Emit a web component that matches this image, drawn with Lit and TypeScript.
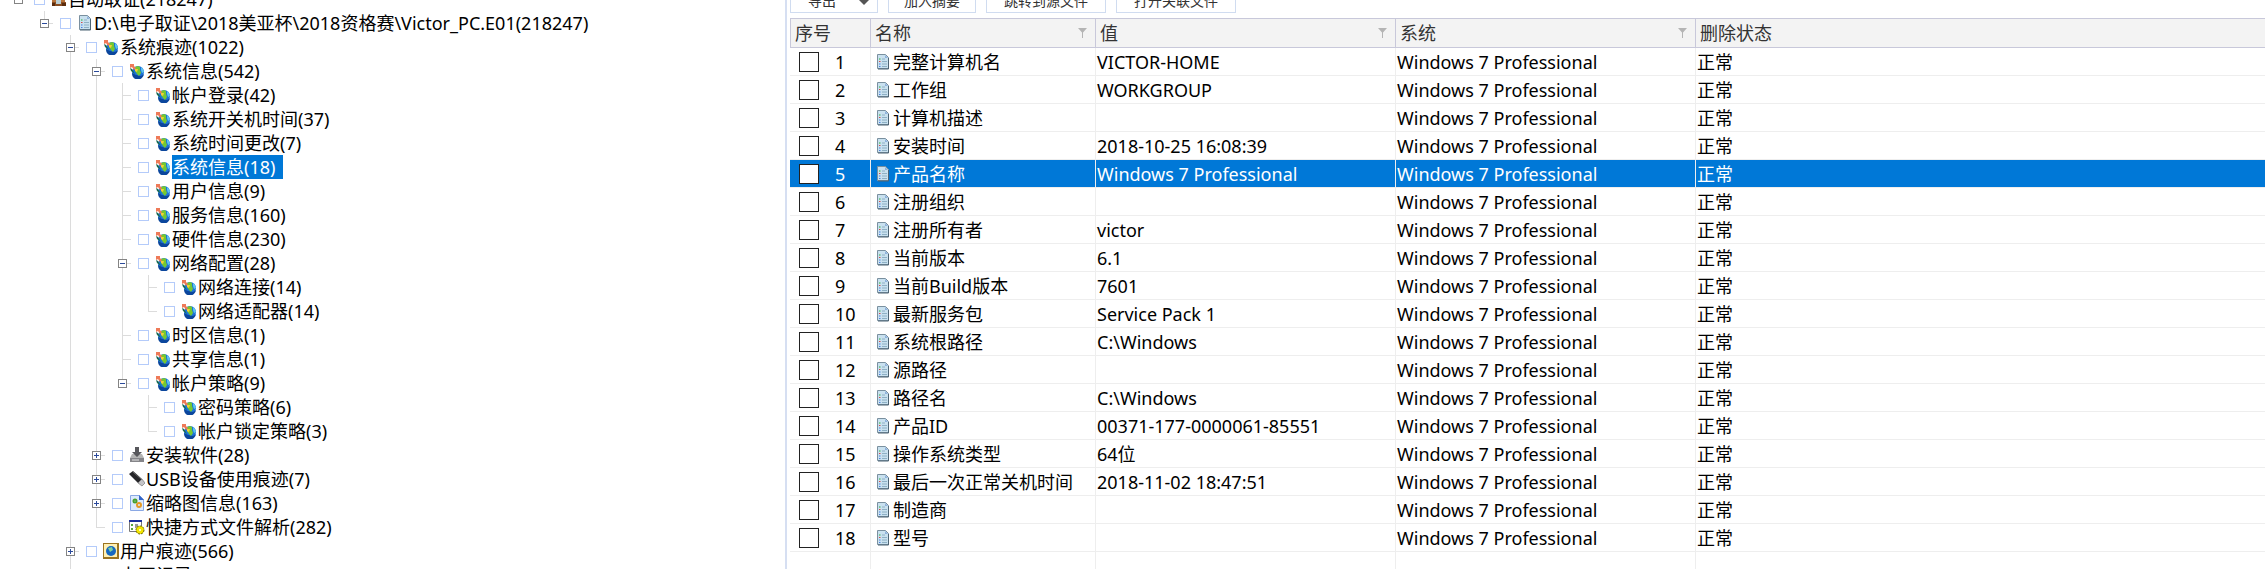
import { LitElement, html, css, svg, nothing } from "lit";
import { customElement, state } from "lit/decorators.js";

interface Node {
  text: string;
  icon: string;
  open?: boolean;
  closed?: boolean;
  more?: boolean;
  children?: Node[];
}

const g = (text: string, children?: Node[]): Node => ({ text, icon: "globe", open: !!children, children });

const TREE: Node = {
  text: "自动取证(218247)", icon: "case", open: true, children: [
    { text: "D:\\电子取证\\2018美亚杯\\2018资格赛\\Victor_PC.E01(218247)", icon: "doc", open: true, children: [
      g("系统痕迹(1022)", [
        g("系统信息(542)", [
          g("帐户登录(42)"), g("系统开关机时间(37)"), g("系统时间更改(7)"), g("系统信息(18)"),
          g("用户信息(9)"), g("服务信息(160)"), g("硬件信息(230)"),
          g("网络配置(28)", [g("网络连接(14)"), g("网络适配器(14)")]),
          g("时区信息(1)"), g("共享信息(1)"),
          g("帐户策略(9)", [g("密码策略(6)"), g("帐户锁定策略(3)")]),
        ]),
        { text: "安装软件(28)", icon: "install", closed: true },
        { text: "USB设备使用痕迹(7)", icon: "usb", closed: true },
        { text: "缩略图信息(163)", icon: "thumb", closed: true },
        { text: "快捷方式文件解析(282)", icon: "link" },
      ]),
      { text: "用户痕迹(566)", icon: "user", closed: true },
      { text: "上网记录(24881)", icon: "net", closed: true, more: true },
    ] },
  ],
};

const W7 = "Windows 7 Professional";
const ROWS: [string, string][] = [
  ["完整计算机名", "VICTOR-HOME"], ["工作组", "WORKGROUP"], ["计算机描述", ""],
  ["安装时间", "2018-10-25 16:08:39"], ["产品名称", W7], ["注册组织", ""],
  ["注册所有者", "victor"], ["当前版本", "6.1"], ["当前Build版本", "7601"],
  ["最新服务包", "Service Pack 1"], ["系统根路径", "C:\\Windows"], ["源路径", ""],
  ["路径名", "C:\\Windows"], ["产品ID", "00371-177-0000061-85551"], ["操作系统类型", "64位"],
  ["最后一次正常关机时间", "2018-11-02 18:47:51"], ["制造商", ""], ["型号", ""],
];

const ICONS: Record<string, unknown> = {
  globe: svg`<circle cx="9" cy="9" r="6" fill="#1d74d8"/><path d="M3 10a6 6 0 0 0 12 1l-3 2-5-1z" fill="#0b469c"/>
    <path d="M6 4l3-1 2 1v3l1 3-2 3-2-2-2-3z" fill="#74c832"/><path d="M12 4l2 2 1 3-2 1-1-3z" fill="#5cc4f0"/>
    <path d="M6 6h3l-1 3-2-1z" fill="#f4cf35"/><path d="M1 1l4 0v2l2 2-2 2-2-3-2 1z" fill="#ee7a58"/><path d="M1 5l2 1 3 5-4-3z" fill="#17694f"/>`,
  net: svg`<circle cx="8" cy="9" r="7" fill="#2b93b5"/><path d="M5 4h6v3H5z" fill="#8fd4de"/>`,
  doc: svg`<path d="M2.500 .5h8l3 3v11h-11z" fill="#c9e1ef" stroke="#7a909f"/><path d="M10 1v3h3" fill="#8fb2dc"/><path d="M13.500 4v11H3" fill="none" stroke="#4d6474"/>
    <path d="M7 5h3M7 7.500h5M7 10h5M7 12.500h5" stroke="#8eb0c4"/><path d="M4 5h1.500" stroke="#2eb135"/><path d="M4 7.500h1.500" stroke="#d14a4a"/><path d="M4 10h1.500M4 12.500h1.500" stroke="#4a7fe0"/>`,
  case: svg`<path d="M1 3h13v8H1z" fill="#b8743c"/><path d="M1 11h14v4H1z" fill="#8a4e22"/><path d="M1 12h3v3H1zM11 12h4v3h-4z" fill="#5a2c0e"/><path d="M5 9h5v4H5z" fill="#b9cfd6"/>`,
  install: svg`<path d="M3 7h10l2 4v4H1v-4z" fill="#b4b4b4"/><path d="M1 11h14v4H1z" fill="#858589"/><path d="M3 13h7" stroke="#e4e4e4"/><path d="M6 0h4v5h3l-5 5-5-5h3z" fill="#58585c"/>`,
  usb: svg`<path d="M0 3l4-3 9 8-4 4z" fill="#26262a"/><path d="M4 1l8 7" stroke="#666"/><path d="M9 12l4-4 3 4-3 3z" fill="#c4c4c8" stroke="#555" stroke-width=".5"/>`,
  thumb: svg`<path d="M1.500 .5h9l4 4v11h-13z" fill="#dceafd" stroke="#8aa8e4"/><path d="M10 0v5h5" fill="#3466c8"/>
    <circle cx="6" cy="6" r="1.500" fill="none" stroke="#46a02e" stroke-width="2"/><circle cx="10" cy="10" r="2" fill="none" stroke="#e59a26" stroke-width="2"/>`,
  link: svg`<path d="M.5 1.500h12v11H.5z" fill="#fff" stroke="#777"/><path d="M0 2h13" stroke="#1d2f9c" stroke-width="2"/><path d="M2 6h2M2 10h2" stroke="#5aa53c" stroke-width="2"/><path d="M6 6h3M6 8h3" stroke="#333"/>
    <circle cx="11" cy="11" r="4" fill="#f4e500" stroke="#6c6400" stroke-dasharray="2 1"/><circle cx="11" cy="11" r="1" fill="#fff"/>`,
  user: svg`<path d="M0 0h16v16H0z" fill="#9c7420"/><path d="M1 1h13v13H1z" fill="#fff0b4"/><circle cx="8" cy="8" r="5" fill="#1668c0"/><path d="M5 5l4-1 1 3-3 2z" fill="#7fd0a0"/>`,
};

const icon = (name: string) => html`<svg class="icon" viewBox="0 0 16 16" aria-hidden="true">${ICONS[name]}</svg>`;

@customElement("app-root")
export class AppRoot extends LitElement {
  static styles = css`
    :host {
      display: flex;
      height: 100vh;
      overflow: hidden;
      background: #fff;
      color: #000;
      font: 18px/24px "Noto Sans", "Noto Sans CJK SC", sans-serif;
      white-space: nowrap;
    }
    * { box-sizing: border-box; }
    input { appearance: none; flex: none; margin: 0; background: #fff; }
    input:checked { background: #0078d7; box-shadow: inset 0 0 0 3px #fff; }
    .icon { width: 16px; height: 16px; flex: none; }

    .side { flex: 0 0 785px; overflow: hidden; display: flex; flex-direction: column; }
    .tree { margin: -13px 0 0 5px; padding: 0; }
    ul { list-style: none; margin: 0; padding: 0; }
    li { display: grid; grid-template-columns: 26px 1fr; }
    .rail {
      display: flex;
      align-items: flex-start;
      padding: 8px 0 0 9px;
      background:
        linear-gradient(#dcdcdc, #dcdcdc) 13px 0 / 1px 100% no-repeat,
        linear-gradient(#dcdcdc, #dcdcdc) 13px 12px / 9px 1px no-repeat;
    }
    .last > .rail {
      background:
        linear-gradient(#dcdcdc, #dcdcdc) 13px 0 / 1px 12px no-repeat,
        linear-gradient(#dcdcdc, #dcdcdc) 13px 12px / 9px 1px no-repeat;
    }
    .toggle {
      width: 9px; height: 9px; padding: 0;
      border: 1px solid #848484;
      background: linear-gradient(#2b4a9b, #2b4a9b) center / 5px 1px no-repeat #fff;
    }
    .plus {
      background:
        linear-gradient(#2b4a9b, #2b4a9b) center / 5px 1px no-repeat,
        linear-gradient(#2b4a9b, #2b4a9b) center / 1px 5px no-repeat #fff;
    }
    .node { display: flex; align-items: center; height: 24px; padding-left: 3px; }
    .node input { width: 11px; height: 11px; margin-right: 6px; border: 1px solid #b4cbfa; }
    .name { margin-left: 1px; padding-right: 8px; height: 24px; }
    .selected .name { background: #0078d7; color: #fff; }

    .main { flex: 1; min-width: 0; border-left: 2px solid #d6dff2; padding-left: 3px; display: flex; flex-direction: column; }
    .bar { display: flex; gap: 10px; margin-top: -13px; margin-bottom: 5px; }
    .bar button {
      width: 120px; height: 26px; padding: 2px 0 0;
      display: flex; align-items: center; justify-content: center;
      border: 1px solid #d0dcf0; background: #fff; color: #333;
      font: 14px/20px "Noto Sans", "Noto Sans CJK SC", sans-serif;
    }
    .bar .short { width: 88px; }
    .bar .export { justify-content: space-between; padding: 2px 8px 0 17px; }
    .arrow { width: 10px; height: 8px; }

    table { width: 100%; border-collapse: separate; border-spacing: 0; table-layout: fixed; }
    .c1 { width: 81px; } .c2 { width: 225px; } .c3, .c4 { width: 300px; }
    th {
      height: 30px; padding: 0 8px 0 4px;
      border: 1px solid #c8c8da; border-left: 0;
      background: #f3f3f3; color: #333; font-weight: 400; text-align: left;
    }
    th:first-child { border-left: 1px solid #c8c8da; }
    th:last-child { border-right: 0; }
    .head { display: flex; align-items: center; justify-content: space-between; }
    .funnel { width: 9px; height: 10px; }
    td { height: 28px; padding: 0 0 0 1px; border-bottom: 1px solid #eee; border-right: 1px solid #eee; }
    td:last-child { border-right: 0; }
    .cell { display: flex; align-items: center; height: 24px; }
    .num input { width: 20px; height: 20px; margin: 0 16px 0 8px; border: 1px solid #222; }
    .item { padding-left: 3px; gap: 2px; }
    .on td { background: #0078d7; color: #fff; }
    .fill { flex: 1; display: grid; grid-template-columns: 81px 225px 300px 300px; }
    .fill span { border-right: 1px solid #eee; }
  `;

  @state() private selected = "系统信息(18)";
  @state() private row = 4;

  private node(n: Node, last: boolean): unknown {
    return html`<li class=${last ? "last" : ""}>
      <div class="rail">${n.open || n.closed
        ? html`<button class="toggle ${n.closed ? "plus" : ""}" aria-label=${n.closed ? "展开" : "折叠"}></button>` : nothing}</div>
      <div>
        <div class="node ${n.text === this.selected ? "selected" : ""}" @click=${() => (this.selected = n.text)}>
          <input type="checkbox" aria-label=${n.text} />${icon(n.icon)}<span class="name">${n.text}</span>
        </div>
        ${n.children ? html`<ul>${n.children.map((c, i) => this.node(c, i === n.children!.length - 1 && !c.more))}</ul>` : nothing}
      </div>
    </li>`;
  }

  private head(text: string, filter: boolean) {
    return html`<th scope="col"><div class="head">${text}${filter
      ? html`<svg class="funnel" viewBox="0 0 9 10" aria-hidden="true"><path d="M0 0h9L5 4.500V10H4V4.500z" fill="#b4b4b4"/></svg>` : nothing}</div></th>`;
  }

  render() {
    return html`
      <nav class="side"><ul class="tree">${this.node(TREE, true)}</ul></nav>
      <main class="main">
        <div class="bar">
          <button class="short export">导出<svg class="arrow" viewBox="0 0 10 8" aria-hidden="true"><path d="M0 0h10v3L5 8 0 3z" fill="#555"/></svg></button>
          <button class="short">加入摘要</button>
          <button>跳转到源文件</button>
          <button>打开关联文件</button>
        </div>
        <table>
          <colgroup><col class="c1" /><col class="c2" /><col class="c3" /><col class="c4" /><col /></colgroup>
          <thead><tr>${this.head("序号", false)}${this.head("名称", true)}${this.head("值", true)}${this.head("系统", true)}${this.head("删除状态", false)}</tr></thead>
          <tbody>${ROWS.map(([name, value], i) => html`
            <tr class=${i === this.row ? "on" : ""} @click=${() => (this.row = i)}>
              <td><label class="cell num"><input type="checkbox" />${i + 1}</label></td>
              <td><div class="cell item">${icon("doc")}${name}</div></td>
              <td>${value}</td><td>${W7}</td><td>正常</td>
            </tr>`)}</tbody>
        </table>
        <div class="fill"><span></span><span></span><span></span><span></span></div>
      </main>`;
  }
}
